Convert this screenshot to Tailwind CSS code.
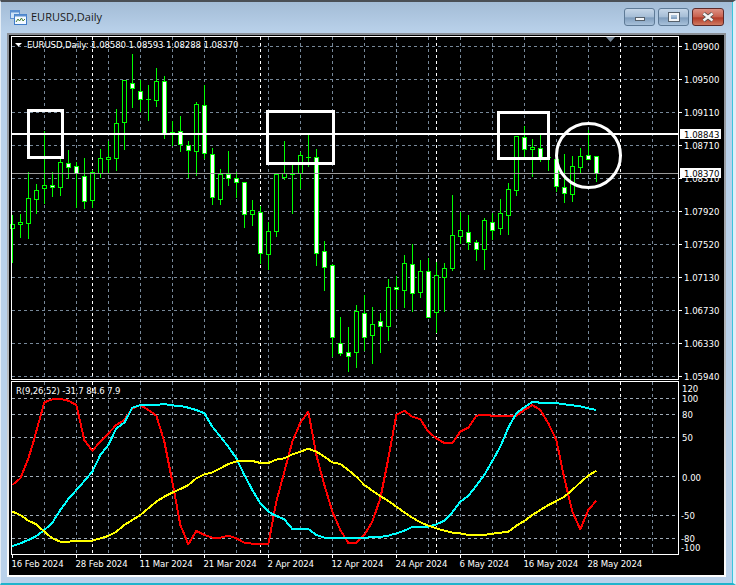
<!DOCTYPE html>
<html lang="en">
<head>
  <meta charset="UTF-8" />
  <title>EURUSD,Daily</title>
  <script src="https://cdn.jsdelivr.net/npm/@tailwindcss/browser@4"></script>
</head>
<body class="w-[736px] h-[585px] overflow-hidden bg-[#b9d1ea]">
  <!-- window -->
  <div class="w-[736px] h-[585px] flex flex-col border-t-2 border-t-[#4a4f55] border-b-2 border-b-[#1fb4cc] border-l-1 border-l-[#e4edf6] border-r-[3px] border-r-[#e4edf6] shadow-[inset_-1px_0_0_#3cc5dc] bg-[linear-gradient(#a3bcd6,#b9d1ea_30px)]">
    <div class="h-[31px] flex items-center justify-between pl-[9px] pr-[9px]">
      <div class="flex items-center gap-[4px]">
        <svg width="17" height="15" viewBox="0 0 17 15">
          <rect x="0.5" y="0.5" width="9" height="8" fill="#cfe2f7" stroke="#5c8fd0"/>
          <rect x="4.5" y="4.5" width="12" height="10" fill="#f4f9ff" stroke="#3f7cc8"/>
          <rect x="0.5" y="0.5" width="9" height="2" fill="#5c8fd0"/>
          <rect x="4.5" y="4.5" width="12" height="2" fill="#5c8fd0"/>
          <path d="M6 12l2-3 1.5 2 2-3 1.5 3 2-2" fill="none" stroke="#4a7f3a"/>
        </svg>
        <span class="font-['Open_Sans',sans-serif] text-[11px] text-[#1a1a1a]">EURUSD,Daily</span>
      </div>
      <div class="flex items-center gap-[3px] mt-[-2px]">
        <div class="w-[31px] h-[18px] flex items-center justify-center rounded-[3px] border border-[#5e7a96] bg-[linear-gradient(#c5d6e8,#a5bdd6_50%,#7f9dbd_55%,#a8c1da)]">
          <div class="w-[10px] h-[4px] mt-[4px] bg-[#f2f4f6] border border-[#56616c]"></div>
        </div>
        <div class="w-[31px] h-[18px] flex items-center justify-center rounded-[3px] border border-[#5e7a96] bg-[linear-gradient(#c5d6e8,#a5bdd6_50%,#7f9dbd_55%,#a8c1da)]">
          <div class="w-[10px] h-[8px] border-2 border-[#f2f4f6] outline outline-[#56616c]"></div>
        </div>
        <div class="w-[32px] h-[18px] flex items-center justify-center rounded-[3px] border border-[#5c2a2a] bg-[linear-gradient(#dd9184,#c8604e_50%,#b23a28_55%,#cf7a62)]">
          <svg width="14" height="10" viewBox="0 0 14 10">
            <path d="M2.5 1.5l9 7M11.5 1.5l-9 7" stroke="#4a4a4a" stroke-width="4"/>
            <path d="M2.5 1.5l9 7M11.5 1.5l-9 7" stroke="#f4f4f4" stroke-width="2.5"/>
          </svg>
        </div>
      </div>
    </div>
    <!-- client area, frame fades from grey to white going down -->
    <div class="ml-[6px] mr-[7px] mb-[6px] flex-1 p-[2px] bg-[linear-gradient(#8a8f96,#b4b8bc_60%,#ffffff)]">
      <div class="h-full bg-black overflow-hidden">
        <svg id="chart" width="715" height="540" viewBox="9 35 715 540" class="block font-['DejaVu_Sans_Condensed','DejaVu_Sans',sans-serif]"></svg>
      </div>
    </div>
  </div>

  <script>
    const svg = document.getElementById('chart');
    const NS = 'http://www.w3.org/2000/svg';
    function add(tag, attrs, text) {
      const el = document.createElementNS(NS, tag);
      for (const k in attrs) el.setAttribute(k, attrs[k]);
      if (text) el.textContent = text;
      svg.appendChild(el);
      return el;
    }
    function hline(y, x1, x2, attrs) { add('line', { x1, x2, y1: y + 0.5, y2: y + 0.5, 'shape-rendering': 'crispEdges', ...attrs }); }
    function vline(x, y1, y2, attrs) { add('line', { x1: x + 0.5, x2: x + 0.5, y1, y2, 'shape-rendering': 'crispEdges', ...attrs }); }

    const GRID = '#778899';
    const mainY = [46, 79, 112, 145, 178, 211, 244, 277, 310, 343, 376];
    const subY = [398, 414, 437, 476, 515, 538];
    const gridX = [44, 76, 108, 140, 172, 204, 236, 268, 300, 332, 364, 396, 428, 460, 492, 524, 556, 588, 652];
    const sepX = [92, 260, 436, 620];

    // grid
    for (const y of mainY) hline(y, 12, 678, { stroke: GRID, 'stroke-dasharray': '3 3' });
    for (const y of subY) hline(y, 12, 678, { stroke: '#a0acb8', 'stroke-dasharray': '3 3' });
    for (const x of gridX) {
      vline(x, 37, 379, { stroke: GRID, 'stroke-dasharray': '3 3' });
      vline(x, 382, 554, { stroke: GRID, 'stroke-dasharray': '3 3' });
    }
    for (const x of sepX) {
      vline(x, 37, 379, { stroke: '#fff', 'stroke-dasharray': '3 3' });
      vline(x, 382, 554, { stroke: '#fff', 'stroke-dasharray': '3 3' });
    }

    // x, wick top, wick bottom, body top, body bottom, filled
    const candles = [
      [12,215,262,224,228,0],[20,214,237,222,224,0],[28,172,238,198,223,0],[36,184,213,190,199,0],
      [44,131,203,185,188,0],[52,172,196,185,187,1],[60,157,195,162,187,0],[68,150,178,163,167,1],
      [76,162,207,166,173,1],[84,158,208,176,201,1],[92,170,207,172,200,0],[100,149,177,158,173,0],
      [108,141,172,157,159,0],[116,109,170,123,158,0],[124,80,149,80,122,0],[132,54,107,83,88,1],
      [140,80,111,91,99,1],[148,85,120,99,100,2],[156,68,106,81,100,0],[164,76,138,81,133,1],
      [172,121,145,132,133,0],[180,116,151,131,144,1],[188,141,177,145,150,1],[196,102,175,104,151,0],
      [204,85,158,105,153,1],[212,148,204,154,197,1],[220,169,204,174,199,0],[228,151,185,174,178,1],
      [236,172,197,178,182,1],[244,182,227,182,214,1],[252,200,225,210,214,0],[260,206,263,212,253,1],
      [268,222,269,231,254,0],[276,174,236,174,231,0],[284,141,179,173,177,0],[292,163,213,174,175,2],
      [300,152,188,155,173,0],[308,135,166,157,158,2],[316,149,265,157,253,1],[324,241,290,251,267,1],
      [332,264,356,265,337,1],[340,317,355,343,353,1],[348,327,371,352,356,1],[356,305,367,311,352,0],
      [364,295,350,313,337,1],[372,307,363,324,335,0],[380,313,352,321,326,1],[388,279,340,287,326,0],
      [396,276,308,287,289,1],[404,255,307,263,290,0],[412,244,311,264,293,1],[420,260,297,271,292,0],
      [428,258,317,271,317,1],[436,262,332,275,312,0],[444,263,311,268,277,0],[452,195,270,235,268,0],
      [460,212,243,230,236,0],[468,215,249,232,242,1],[476,240,260,242,249,1],[484,218,269,220,249,0],
      [492,213,239,222,230,1],[500,199,234,213,228,0],[508,183,234,189,215,0],[516,136,195,136,190,0],
      [524,126,157,137,149,1],[532,139,176,147,149,0],[540,135,161,148,157,1],[548,157,170,157,158,2],
      [556,157,191,159,186,1],[564,154,202,187,193,1],[572,156,201,166,194,0],[580,148,172,156,167,0],
      [588,130,159,155,159,1],[596,156,181,156,173,1]
    ];
    for (const [x, wt, wb, bt, bb, f] of candles) {
      vline(x, wt, wb + 1, { stroke: '#00ff00' });
      if (f === 2) { hline(bt, x - 2, x + 3, { stroke: '#00ff00' }); continue; }
      add('rect', { x: x - 1.5, y: bt + 0.5, width: 4, height: bb - bt, fill: f ? '#fff' : '#000', stroke: '#00ff00', 'shape-rendering': 'crispEdges' });
    }

    // price lines
    hline(173, 12, 678, { stroke: '#9a9a9a' });
    add('line', { x1: 12, x2: 678, y1: 134, y2: 134, stroke: '#fff', 'stroke-width': 2, 'shape-rendering': 'crispEdges' });

    // drawn boxes and circle
    for (const [x, y, w, h] of [[28.5,110.5,34,47],[267.5,111.5,66,52],[498.5,112.5,50,46]]) {
      add('rect', { x, y, width: w, height: h, fill: 'none', stroke: '#fff', 'stroke-width': 3 });
    }
    add('circle', { cx: 588.5, cy: 155.5, r: 32, fill: 'none', stroke: '#fff', 'stroke-width': 3 });
    add('path', { d: 'M606 37h9l-4.5 5z', fill: GRID });

    // sub window lines, chart-zoom coordinates (x/3, 375+y/3)
    function series(list, stroke) {
      add('polyline', { points: list.map(([x, y]) => `${x},${y}`).join(' '), fill: 'none', stroke, 'stroke-width': 2, 'shape-rendering': 'crispEdges', 'stroke-linejoin': 'round' });
    }
    const z5 = (a) => a.map(([x, y]) => [x / 3, 375 + y / 3]);
    const z6 = (a) => a.map(([x, y]) => [368 + x / 3, 375 + y / 3]);
    series(z5([[37,330],[61,310],[85,250],[97,212],[133,82],[157,73],[181,72],[205,77],[229,90],[253,195],[277,227],[301,200],[325,175],[349,150],[373,135],[397,100],[421,90],[445,105],[469,122],[493,200],[517,320],[541,450],[565,508],[589,468],[613,480],[637,488],[661,488],[685,482],[709,490],[733,503],[757,506],[781,507],[805,507],[829,380],[853,290],[877,200],[901,143],[925,110],[949,240],[973,330],[997,410],[1021,465],[1045,504],[1069,504],[1093,480]])
      .concat(z6([[13,440],[37,370],[61,250],[85,120],[109,107],[133,125],[157,133],[181,170],[205,190],[229,204],[253,204],[277,170],[301,158],[325,122],[349,120],[373,122],[397,122],[421,122],[445,122],[469,105],[493,90],[517,105],[541,145],[565,195],[589,310],[613,410],[637,463],[661,405],[685,377]])), '#ff0000');
    series(z5([[37,513],[61,505],[85,495],[109,483],[133,465],[157,443],[181,405],[205,372],[229,345],[253,318],[277,290],[301,240],[325,210],[349,160],[373,143],[397,98],[421,90],[445,90],[469,90],[493,87],[517,91],[541,93],[565,98],[589,105],[613,115],[637,155],[661,185],[685,215],[709,250],[733,300],[757,345],[781,385],[805,410],[829,423],[853,433],[877,462],[901,462],[925,462],[949,480],[973,488],[997,488],[1021,488],[1045,488],[1069,488],[1093,488]])
      .concat(z6([[13,487],[37,486],[61,482],[85,475],[109,467],[133,456],[157,455],[181,455],[205,448],[229,437],[253,412],[277,380],[301,362],[325,332],[349,300],[373,258],[397,215],[421,158],[445,115],[469,97],[493,81],[517,83],[541,84],[565,84],[589,88],[613,91],[637,94],[661,100],[685,105]])), '#00ffff');
    series(z5([[37,410],[61,420],[85,437],[109,448],[133,470],[157,490],[181,500],[205,500],[229,498],[253,497],[277,497],[301,490],[325,483],[349,470],[373,450],[397,435],[421,420],[445,400],[469,380],[493,365],[517,353],[541,342],[565,330],[589,310],[613,298],[637,292],[661,280],[685,267],[709,259],[733,258],[757,258],[781,264],[805,264],[829,254],[853,250],[877,238],[901,230],[925,221],[949,230],[973,245],[997,262],[1021,267],[1045,285],[1069,305],[1093,330]])
      .concat(z6([[13,347],[37,363],[61,378],[85,395],[109,412],[133,428],[157,442],[181,452],[205,460],[229,467],[253,473],[277,475],[301,480],[325,480],[349,480],[373,476],[397,473],[421,470],[445,452],[469,438],[493,420],[517,405],[541,390],[565,378],[589,365],[613,345],[637,322],[661,302],[685,287]])), '#ffff00');

    // chart frames
    for (const [y1, y2] of [[36, 379], [381, 554]]) {
      add('rect', { x: 11.5, y: y1 + 0.5, width: 667, height: y2 - y1, fill: 'none', stroke: '#fff', 'shape-rendering': 'crispEdges' });
    }

    // labels
    const label = (x, y, t, fill = '#fff', spacing = 0) => add('text', { x, y, fill, 'font-size': 9.5, 'letter-spacing': spacing }, t);
    for (const [y, t] of [[46,'1.09900'],[79,'1.09500'],[112,'1.09110'],[145,'1.08710'],[178,'1.08310'],[211,'1.07920'],[244,'1.07520'],[277,'1.07130'],[310,'1.06730'],[343,'1.06330'],[376,'1.05940']]) {
      hline(y, 679, 682, { stroke: '#fff' });
      label(684, y + 4, t);
    }
    for (const [y, b, t] of [[134, 129, '1.08843'], [173, 168, '1.08370']]) {
      add('rect', { x: 680, y: b, width: 41, height: 10, fill: '#fff' });
      label(684, y + 4, t, '#000');
    }
    for (const [y, x, t] of [[388,682,'120'],[398,682,'100'],[414,682,'80'],[437,682,'50'],[476.5,682,'0.00'],[515,681,'-50'],[538,681,'-80'],[547,681,'-100']]) {
      label(x, y + 4, t);
    }
    for (const [x, t] of [[12,'16 Feb 2024'],[76,'28 Feb 2024'],[140,'11 Mar 2024'],[204,'21 Mar 2024'],[268,'2 Apr 2024'],[332,'12 Apr 2024'],[396,'24 Apr 2024'],[460,'6 May 2024'],[524,'16 May 2024'],[588,'28 May 2024']]) {
      vline(x, 555, 558, { stroke: '#fff' });
      label(x - 0.5, 567, t, '#fff', -0.1);
    }
    add('path', { d: 'M15 43h7l-3.5 3.5z', fill: '#fff' });
    label(27, 48, 'EURUSD,Daily: 1.08580 1.08593 1.08288 1.08370', '#fff', -0.07);
    label(16, 394, 'R(9,26,52) -31.7 84.6 7.9', '#fff', -0.15);
  </script>
</body>
</html>
